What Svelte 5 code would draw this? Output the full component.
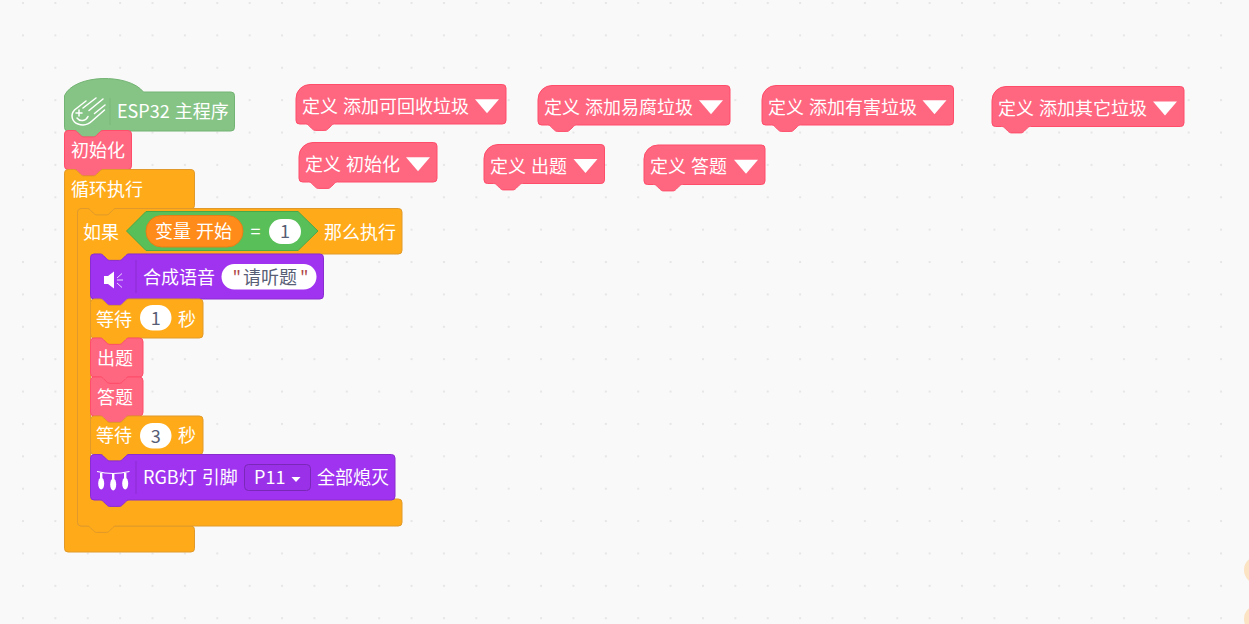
<script>
  const R = 3.6;
  const S = 0.8;
  const NX = 9.7;
  const NW = 36 * S;

  function notch(dir) {
    const d = dir * S;
    return `c ${2 * d},0 ${3 * d},${S} ${4 * d},${2 * S} l ${4 * d},${4 * S} c ${d},${S} ${2 * d},${2 * S} ${4 * d},${2 * S} h ${12 * d} c ${2 * d},0 ${3 * d},${-S} ${4 * d},${-2 * S} l ${4 * d},${-4 * S} c ${d},${-S} ${2 * d},${-2 * S} ${4 * d},${-2 * S}`;
  }

  const arc = (dx, dy, r = R, sweep = 1) => `a ${r} ${r} 0 0 ${sweep} ${dx} ${dy}`;

  function stack(x, y, x2, y2) {
    return `M ${x} ${y + R} ${arc(R, -R)} H ${x + NX} ${notch(1)} H ${x2 - R} ${arc(R, R)} V ${y2 - R} ${arc(-R, R)} H ${x + NX + NW} ${notch(-1)} H ${x + R} ${arc(-R, -R)} Z`;
  }

  function hat(x, y, x2, y2) {
    return `M ${x} ${y + R} C ${x + 10} ${y - 18} ${x + 64} ${y - 19} ${x + 79} ${y} H ${x2 - R} ${arc(R, R)} V ${y2 - R} ${arc(-R, R)} H ${x + NX + NW} ${notch(-1)} H ${x + R} ${arc(-R, -R)} Z`;
  }

  function def(x, y, x2, y2) {
    const r = 14;
    return `M ${x} ${y + r} ${arc(r, -r, r)} H ${x2 - R} ${arc(R, R)} V ${y2 - R} ${arc(-R, R)} H ${x + NX + NW} ${notch(-1)} H ${x + R} ${arc(-R, -R)} Z`;
  }

  function cblock(x, y, x2, headY, armX, footY, footX2, y2, notchBottom) {
    return `M ${x} ${y + R} ${arc(R, -R)} H ${x + NX} ${notch(1)} H ${x2 - R} ${arc(R, R)} V ${headY - R} ${arc(-R, R)} H ${armX + NX + NW} ${notch(-1)} H ${armX + R} ${arc(-R, R, R, 0)} V ${footY - R} ${arc(R, R, R, 0)} H ${footX2 - R} ${arc(R, R)} V ${y2 - R} ${arc(-R, R)} ${notchBottom ? `H ${x + NX + NW} ${notch(-1)}` : ''} H ${x + R} ${arc(-R, -R)} Z`;
  }

  const defs = [
    { x: 296, y: 84.5, x2: 506, y2: 124, label: '定义 添加可回收垃圾' },
    { x: 538, y: 85.5, x2: 730, y2: 125, label: '定义 添加易腐垃圾' },
    { x: 762, y: 85.5, x2: 953.5, y2: 125, label: '定义 添加有害垃圾' },
    { x: 992, y: 86.5, x2: 1184, y2: 126.5, label: '定义 添加其它垃圾' },
    { x: 299, y: 142.5, x2: 437, y2: 182, label: '定义 初始化' },
    { x: 484, y: 144.5, x2: 604.5, y2: 183.5, label: '定义 出题' },
    { x: 644, y: 145, x2: 765, y2: 184.5, label: '定义 答题' }
  ];
</script>

<svg class="workspace" width="1249" height="624" viewBox="0 0 1249 624" xmlns="http://www.w3.org/2000/svg">
  <defs>
    <pattern id="grid" x="22" y="2" width="32.38" height="32.38" patternUnits="userSpaceOnUse">
      <rect class="dot" x="0" y="0" width="2" height="2" />
    </pattern>
  </defs>
  <rect class="paper" width="1249" height="624" />
  <rect width="1249" height="624" fill="url(#grid)" />

  <circle class="blob" cx="1258" cy="570" r="14" />
  <circle class="blob" cx="1258" cy="619" r="14" />

  {#each defs as d}
    <path class="pink" d={def(d.x, d.y, d.x2, d.y2)} />
    <text class="t" x={d.x + 6} y={(d.y + d.y2) / 2 + 8.5}>{d.label}</text>
    <polygon class="tri" points="{d.x2 - 31},{(d.y + d.y2) / 2 - 5} {d.x2 - 7},{(d.y + d.y2) / 2 - 5} {d.x2 - 19},{(d.y + d.y2) / 2 + 9}" />
  {/each}

  <!-- main program stack -->
  <path class="hat" d={hat(64.5, 92, 234.5, 131)} />
  <line class="div-green" x1="110" y1="98" x2="110" y2="125" />
  <g class="icon-line">
    <path d="M86 101 L74.5 110 C70 115 72 122 78 124 C84 126 89 124 92 121 L104.5 110" />
    <path d="M83 108 L96 98" />
    <path d="M89 110.5 L103 99" />
    <path d="M94.5 113.5 L105 105" />
    <path d="M76 113 H82 M79 110 V116" />
    <path d="M77 118 C80 122 86 121 88 116.5" />
  </g>
  <text class="t" x="117" y="118">ESP32 主程序</text>

  <path class="pink" d={stack(64.5, 130.5, 131.5, 169.5)} />
  <text class="t" x="71" y="157">初始化</text>

  <path class="orange" d={cblock(64.5, 169.5, 194.5, 209, 77.5, 526, 194.5, 552, false)} />
  <text class="t" x="71" y="196">循环执行</text>

  <path class="orange" d={cblock(77.5, 208.5, 402, 254, 90.5, 499, 402, 526, true)} />
  <text class="t" x="83" y="239">如果</text>

  <polygon class="green" points="126.5,231 146,211.5 298,211.5 318,231 298,250.5 146,250.5" />
  <rect class="var" x="146" y="215.5" width="97" height="31.5" rx="15.7" />
  <text class="t" x="155" y="238">变量 开始</text>
  <text class="t" x="250.5" y="238">=</text>
  <rect class="field" x="269" y="219" width="32" height="25" rx="12.5" />
  <text class="n" x="285" y="238">1</text>
  <text class="t" x="324" y="239">那么执行</text>

  <path class="purple" d={stack(90.5, 254, 323.5, 299)} />
  <line class="div-purple" x1="136" y1="260" x2="136" y2="293" />
  <path class="icon-fill" d="M104 276 H108 L114 271.5 V288.5 L108 284 H104 Z" />
  <path class="icon-thin" d="M117 278 L122 273.5 M117 280 H123 M117 283 L122 287.5" />
  <text class="t" x="143" y="284">合成语音</text>
  <rect class="field" x="221.5" y="264" width="95" height="25.5" rx="12.7" />
  <text class="q" x="232.5" y="284">"</text>
  <text class="s" x="243" y="284">请听题</text>
  <text class="q" x="300" y="284">"</text>

  <path class="orange" d={stack(90.5, 299, 203, 338)} />
  <text class="t" x="96" y="326">等待</text>
  <rect class="field" x="140" y="305" width="31.5" height="25.5" rx="12.7" />
  <text class="n" x="155.7" y="324.5">1</text>
  <text class="t" x="178" y="326">秒</text>

  <path class="pink" d={stack(90.5, 338, 143, 377)} />
  <text class="t" x="97" y="365">出题</text>

  <path class="pink" d={stack(90.5, 377, 143, 416)} />
  <text class="t" x="97" y="404">答题</text>

  <path class="orange" d={stack(90.5, 416, 203, 454.5)} />
  <text class="t" x="96" y="442">等待</text>
  <rect class="field" x="140" y="423" width="31.5" height="25.5" rx="12.7" />
  <text class="n" x="155.7" y="442.5">3</text>
  <text class="t" x="178" y="442">秒</text>

  <path class="purple" d={stack(90.5, 454.5, 395, 500)} />
  <line class="div-purple" x1="136" y1="461" x2="136" y2="494" />
  <path class="icon-wire" d="M97 471.5 C107 474 119 474 129.5 471.5" />
  <g class="icon-bulbs">
    <rect x="100" y="473" width="2.4" height="5" />
    <rect x="112" y="474" width="2.4" height="5" />
    <rect x="124" y="473" width="2.4" height="5" />
    <ellipse cx="101.2" cy="483.5" rx="3" ry="6" />
    <ellipse cx="113.2" cy="484.5" rx="3" ry="6" />
    <ellipse cx="125.2" cy="483.5" rx="3" ry="6" />
  </g>
  <text class="t" x="143" y="484">RGB灯 引脚</text>
  <rect class="drop" x="244.5" y="464.5" width="66" height="26" rx="4" />
  <text class="t" x="254" y="484">P11</text>
  <polygon class="caret" points="291.5,477 300.5,477 296,482" />
  <text class="t" x="317" y="484">全部熄灭</text>
</svg>

<style>
  :global(body) {
    margin: 0;
    overflow: hidden;
    background: #f9f9f9;
  }
  .workspace {
    display: block;
  }
  .paper {
    fill: #f9f9f9;
  }
  .dot {
    fill: #e6e6e6;
  }
  .blob {
    fill: #fbe3c4;
  }
  .pink {
    fill: #ff6680;
    stroke: #ff4d6a;
    stroke-width: 1;
  }
  .orange {
    fill: #ffab19;
    stroke: #e0992a;
    stroke-width: 1;
  }
  .purple {
    fill: #a033f0;
    stroke: #8a2dcf;
    stroke-width: 1;
  }
  .hat {
    fill: #86c486;
    stroke: #73b373;
    stroke-width: 1;
  }
  .green {
    fill: #59c059;
    stroke: #4aa84a;
    stroke-width: 1;
  }
  .var {
    fill: #ff8c1a;
    stroke: #e57e17;
    stroke-width: 1;
  }
  .field {
    fill: #fff;
  }
  .drop {
    fill: #9a31e8;
    stroke: #7a28b8;
    stroke-width: 1;
  }
  .caret,
  .tri,
  .icon-fill {
    fill: #fff;
  }
  .div-green {
    stroke: #78b878;
    stroke-width: 1;
  }
  .div-purple {
    stroke: #8a2dcf;
    stroke-width: 1;
  }
  .icon-line {
    fill: none;
    stroke: #fff;
    stroke-width: 1.5;
    stroke-linecap: round;
  }
  .icon-thin {
    fill: none;
    stroke: #fff;
    stroke-width: 0.8;
  }
  .icon-wire {
    fill: none;
    stroke: #fff;
    stroke-width: 1.2;
  }
  .icon-bulbs {
    fill: #fff;
  }
  text {
    font-family: "Noto Sans CJK SC", "Noto Sans", sans-serif;
    font-size: 18px;
    word-spacing: 1px;
  }
  .t {
    fill: #fff;
  }
  .n {
    fill: #575e75;
    text-anchor: middle;
  }
  .s {
    fill: #575e75;
  }
  .q {
    fill: #b04a4a;
  }
</style>
